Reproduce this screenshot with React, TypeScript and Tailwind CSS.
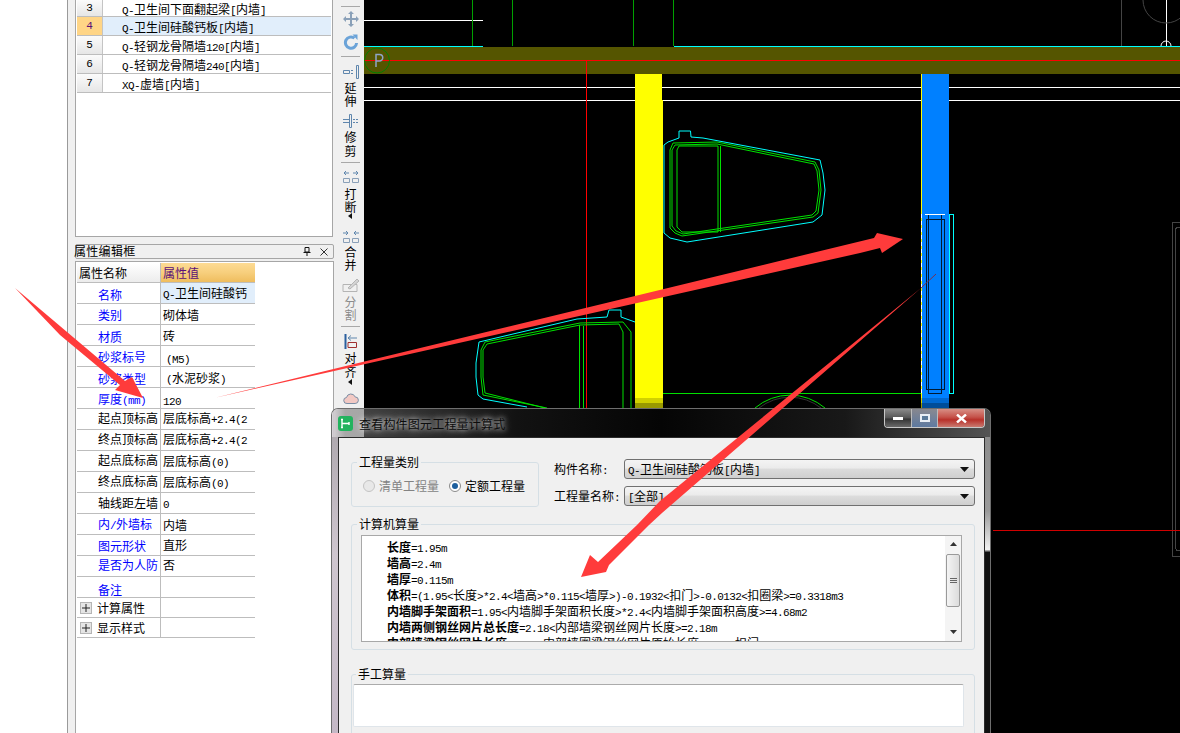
import React from "react";

const Mix = ({ text }: { text: string }) => (
  <>
    {text
      .split(/([\x00-\x7f]+)/)
      .filter(Boolean)
      .map((s, i) =>
        /^[\x00-\x7f]/.test(s) ? (
          <span key={i} className="font-['Liberation_Mono',monospace] text-[11px] font-normal leading-none tracking-[-0.6px]">
            {s}
          </span>
        ) : (
          <span key={i}>{s}</span>
        )
      )}
  </>
);

const listRows = [
  { no: "3", name: "Q-卫生间下面翻起梁[内墙]", h: "h-[17px]" },
  { no: "4", name: "Q-卫生间硅酸钙板[内墙]", h: "h-[19px]", active: true },
  { no: "5", name: "Q-轻钢龙骨隔墙120[内墙]", h: "h-[19px]" },
  { no: "6", name: "Q-轻钢龙骨隔墙240[内墙]", h: "h-[19px]" },
  { no: "7", name: "XQ-虚墙[内墙]", h: "h-[19px]" },
];

// lc / vc nudge the label and value text, the old grid draws them unevenly
const props = [
  { label: "名称", value: "Q-卫生间硅酸钙", blue: true, active: true, lc: "pt-[4px]", vc: "" },
  { label: "类别", value: "砌体墙", blue: true, lc: "pt-[2px]", vc: "pt-[2px]" },
  { label: "材质", value: "砖", blue: true, lc: "pt-[4px]", vc: "pt-[2px]" },
  { label: "砂浆标号", value: "(M5)", blue: true, lc: "pt-[2px]", vc: "pl-[5px] pt-[4px]" },
  { label: "砂浆类型", value: "(水泥砂浆)", blue: true, lc: "pt-[4px]", vc: "pl-[5px] pt-[2px]" },
  { label: "厚度(mm)", value: "120", blue: true, lc: "pt-[2px]", vc: "pt-[4px]" },
  { label: "起点顶标高", value: "层底标高+2.4(2", lc: "pb-[2px]", vc: "pb-[2px]" },
  { label: "终点顶标高", value: "层底标高+2.4(2", lc: "pb-[2px]", vc: "pb-[2px]" },
  { label: "起点底标高", value: "层底标高(0)", lc: "pb-[2px]", vc: "" },
  { label: "终点底标高", value: "层底标高(0)", lc: "pb-[2px]", vc: "" },
  { label: "轴线距左墙", value: "0", lc: "", vc: "" },
  { label: "内/外墙标", value: "内墙", blue: true, lc: "", vc: "pt-[2px]" },
  { label: "图元形状", value: "直形", blue: true, lc: "pt-[2px]", vc: "" },
  { label: "是否为人防", value: "否", blue: true, lc: "pb-[2px]", vc: "pb-[2px]" },
  { label: "备注", value: "", blue: true, lc: "pt-[6px]", vc: "" },
];

const calcLines = [
  { b: "长度", t: "=1.95m" },
  { b: "墙高", t: "=2.4m" },
  { b: "墙厚", t: "=0.115m" },
  { b: "体积", t: "=(1.95<长度>*2.4<墙高>*0.115<墙厚>)-0.1932<扣门>-0.0132<扣圈梁>=0.3318m3" },
  { b: "内墙脚手架面积", t: "=1.95<内墙脚手架面积长度>*2.4<内墙脚手架面积高度>=4.68m2" },
  { b: "内墙两侧钢丝网片总长度", t: "=2.18<内部墙梁钢丝网片长度>=2.18m" },
  { b: "内部墙梁钢丝网片长度", t: "=2.78<内部墙圈梁钢丝网片原始长度>-1.6<扣门>=0.18" },
];

const Sep = ({ className }: { className: string }) => (
  <div className={`h-px w-[19px] shrink-0 bg-[#a8a8a8] ${className}`} />
);

const Label = ({ text, className, gray }: { text: string; className: string; gray?: boolean }) => (
  <div className={`w-3 shrink-0 text-center text-[12px] ${gray ? "text-[#8c8c8c]" : "text-black"} ${className}`}>
    {text.split("").map((c) => (
      <div key={c}>{c}</div>
    ))}
  </div>
);

const MoreArrow = () => (
  <svg width="5" height="6" viewBox="0 0 5 6" className="shrink-0">
    <path d="M4 0V6L0 3Z" fill="#111" />
  </svg>
);

const Toolbar = () => (
  <div className="flex w-[27px] shrink-0 flex-col items-center bg-[#f0f0f0]">
    <Sep className="mt-[6px]" />
    <svg width="16" height="16" viewBox="0 0 16 16" className="mt-[4px] shrink-0" fill="#8aa0b8">
      <path d="M8 0l3 3H9v4h4V5l3 3-3 3V9H9v4h2l-3 3-3-3h2V9H3v2L0 8l3-3v2h4V3H5z" />
    </svg>
    <svg width="16" height="16" viewBox="0 0 16 16" className="mt-[7px] shrink-0" fill="none">
      <path d="M11.5 4.2A5.6 5.6 0 1 0 13.6 9" stroke="#6ba3d8" strokeWidth="3" />
      <path d="M9.5 0.5h5v5.5z" fill="#6ba3d8" />
    </svg>
    <Sep className="mt-[6px]" />
    <svg width="16" height="14" viewBox="0 0 16 14" className="mt-[8px] shrink-0" fill="none" stroke="#5f86ad">
      <path d="M0.5 5.5h6v3h-6zM8 5.5h2M8 8.5h2" />
      <path d="M13.5 0.5h2v13h-2z" />
    </svg>
    <Label text="延伸" className="mt-[2px] leading-[13px]" />
    <svg width="16" height="14" viewBox="0 0 16 14" className="mt-[7px] shrink-0" fill="none" stroke="#5f86ad">
      <path d="M6.5 0.5h2v13h-2zM0 5.5h6M0 8.5h6M10 5.5h2M13 5.5h2M10 8.5h2M13 8.5h2" />
    </svg>
    <Label text="修剪" className="mt-[2px] leading-[14px]" />
    <Sep className="mt-[4px]" />
    <svg width="16" height="14" viewBox="0 0 16 14" className="mt-[7px] shrink-0" fill="none" stroke="#5f86ad">
      <path d="M6 3H1M3 1L1 3l2 2M10 3h5M13 1l2 2-2 2" />
      <path d="M0.5 8.5h6v4h-6zM9.5 8.5h6v4h-6z" stroke="#8aa0b8" />
    </svg>
    <Label text="打断" className="mt-[3px] leading-[13px]" />
    <MoreArrow />
    <svg width="16" height="14" viewBox="0 0 16 14" className="mt-[11px] shrink-0" fill="none" stroke="#5f86ad">
      <path d="M0 3h5M3 1l2 2-2 2M16 3h-5M13 1l-2 2 2 2" />
      <path d="M0.5 8.5h6v4h-6zM9.5 8.5h6v4h-6z" stroke="#8aa0b8" />
    </svg>
    <Label text="合并" className="mt-[1px] leading-[13px]" />
    <svg width="17" height="15" viewBox="0 0 17 15" className="mt-[7px] shrink-0" fill="none" stroke="#b4b4b4">
      <path d="M1 6.5h14M1 13.5h14M1 6.5v7M15 6.5v7" />
      <path d="M6 10L15 1l2 2-9 8z" fill="#d4d4d4" />
    </svg>
    <Label text="分割" gray className="mt-[2px] leading-[13px]" />
    <Sep className="mt-[5px]" />
    <svg width="16" height="16" viewBox="0 0 16 16" className="mt-[7px] shrink-0" fill="none">
      <path d="M2.5 0v15" stroke="#2a5f9e" strokeWidth="2" />
      <path d="M5 8.5h8.5v5H5z" stroke="#a03030" />
      <path d="M14 4H5M8 1.5L5 4l3 2.5" stroke="#5f86ad" />
    </svg>
    <Label text="对齐" className="mt-[1px] leading-[14px]" />
    <MoreArrow />
    <svg width="16" height="13" viewBox="0 0 16 13" className="mt-[7px] shrink-0" fill="#f2c9c4" stroke="#7a8ea5">
      <path d="M4 11.5a3 3 0 0 1-.5-6 4.5 4.5 0 0 1 8.6-.6 3.2 3.2 0 0 1 0 6.6z" />
    </svg>
  </div>
);

const Drawing = () => (
  <svg width="816" height="733" viewBox="364 0 816 733" className="block" fill="none" shapeRendering="crispEdges">
    <path d="M364 20.5H483M364 87.5H1180M364 100.5H1180" stroke="#fff" />
    <path d="M472.5 0V46M512.5 0V46M633.5 0V46M673.5 0V46" stroke="#00a000" />
    <path d="M1121.5 0V46" stroke="#444" />
    <path d="M1166.5 0V46" stroke="#fff" />
    <g shapeRendering="auto">
      <circle cx="1166" cy="0" r="23" stroke="#444" />
      <path d="M1161 46a5 5 0 0 1 10 0" stroke="#fff" />
    </g>
    <path d="M364 46.5H483M674 46.5H1180" stroke="#00ffff" />
    <rect x="364" y="47" width="816" height="27" fill="#555500" stroke="none" />
    <path d="M364 60.5H1180M586.5 60V408" stroke="#ff0000" />
    <rect x="635" y="74" width="27" height="334" fill="#ffff00" stroke="none" />
    <rect x="662" y="100" width="1" height="308" fill="#ffff00" stroke="none" />
    <rect x="922" y="74" width="27" height="334" fill="#0080ff" stroke="none" />
    <path d="M921.5 74V408" stroke="#ffff00" />
    <rect x="635" y="398" width="28" height="5" fill="#000" fillOpacity="0.18" stroke="none" />
    <rect x="635" y="403" width="28" height="5" fill="#000" fillOpacity="0.4" stroke="none" />
    <rect x="921" y="398" width="28" height="5" fill="#000" fillOpacity="0.18" stroke="none" />
    <rect x="921" y="403" width="28" height="5" fill="#000" fillOpacity="0.4" stroke="none" />
    <g shapeRendering="auto">
      <circle cx="377" cy="60.5" r="12.5" stroke="#008000" />
      <path d="M376 67V54.5h3.5a3 3 0 0 1 0 6.5H376" stroke="#8ea5c8" strokeWidth="1.5" />
      <path
        d="M679 138V131H690.5L691 137L703 138L820 160L823 173L825 190L822 215L813 222L687 242L670 238L664 233V145L668 142L679 138"
        stroke="#00ffff"
      />
      <path
        d="M670 150L673 143L717 142L815 162L819 170L821 190L818 213L813 217L682 236L675 233L670 228Z"
        stroke="#00e000"
      />
      <path d="M672 150L675 145L717 144L814 164L817 171L819 190L816 211L812 215L683 234L676 231L672 226Z" stroke="#00e000" />
      <path d="M677 227V150L679 146H718V232H682L677 227M720.5 146V232" stroke="#00e000" />
      <path
        d="M635 322L621 317V310H609L607 317L577 319L479 342L476 363V377L478 395L483 399L527 407"
        stroke="#00ffff"
      />
      <path d="M547 408L483 395L481 377V350L485 342L580 323L623 322L631 332V408" stroke="#00e000" />
      <path d="M545 408L485 393L483 377V350L487 344L580 325L619 324L623 332V408" stroke="#00e000" />
      <path d="M579.5 325V408M583.5 326V408" stroke="#00e000" />
      <path d="M663 393.5H921" stroke="#00e000" />
      <path d="M755 408A54 54 0 0 1 825 408" stroke="#00e000" />
      <path d="M759 408A50 50 0 0 1 821 408" stroke="#333" />
    </g>
    <rect x="928.5" y="214.5" width="13" height="179" stroke="#001a33" />
    <rect x="926.5" y="219.5" width="18" height="170" stroke="#001a33" />
    <rect x="949.5" y="214.5" width="4" height="179" stroke="#00ffff" />
    <path d="M921.5 214V393" stroke="#fff" strokeDasharray="4 3" />
    <path d="M925 214.5H945" stroke="#fff" />
    <path d="M1180 222.5H1172.5V556.5H1180M1180 227.5H1177L1175.5 229V548L1177 550.5H1180" stroke="#444" />
    <path d="M993 530.5H1180" stroke="#d00000" />
  </svg>
);

const Arrows = () => (
  <svg width="1180" height="733" viewBox="0 0 1180 733" className="pointer-events-none absolute inset-0 z-20" fill="#ff3b3b">
    <path d="M214 398L874 238L877 233L903 239L882 253L880 248L860 253Z" />
    <path d="M15 288L125 381L132 377L143 398L115 390L120 385L60 335Z" />
    <path d="M921 288L660 501L637 525L598 562L590 555L581 577L606 572L609 565L649 525L662 513Z" />
    <path d="M921 288L936 274" stroke="#7a3050" strokeWidth="1" />
  </svg>
);

const Select = ({ text }: { text: string }) => (
  <div className="flex h-[20px] w-[351px] items-center justify-between rounded-[3px] border border-[#707070] bg-[linear-gradient(#f4f4f4_0%,#ebebeb_45%,#dcdcdc_50%,#cfcfcf_100%)] pl-[3px] pr-[5px] text-[12px] leading-[14px] text-black">
    <span>
      <Mix text={text} />
    </span>
    <svg width="9" height="5" viewBox="0 0 9 5">
      <path d="M0 0H9L4.5 5Z" fill="#111" />
    </svg>
  </div>
);

const Dialog = () => (
  <div className="absolute left-[331px] top-[408px] z-10 flex h-[325px] w-[660px] flex-col overflow-hidden rounded-t-[7px] border border-b-0 border-[#6e6e6e]">
    <div className="flex h-[28px] shrink-0 items-start bg-[linear-gradient(90deg,rgba(215,210,215,0.95)_0%,rgba(120,120,120,0.6)_2%,rgba(40,40,40,0.45)_28%,rgba(25,25,25,0.2)_50%,rgba(70,70,70,0.35)_78%,rgba(140,140,140,0.6)_100%)] pl-[6px] pr-[5px]">
      <svg width="15" height="15" viewBox="0 0 15 15" className="mt-[7px] shrink-0">
        <rect width="15" height="15" rx="3" fill="#22b35e" />
        <path d="M4 3.5V11.5M4 7.5H11M3 3.5H5M3 11.5H5M11 6V9" stroke="#fff" strokeWidth="1.4" fill="none" />
      </svg>
      <span className="ml-[6px] mt-[7px] text-[12px] leading-[15px] tracking-[0.2px] text-[#0c0c0c] [text-shadow:0_0_5px_rgba(255,255,255,0.8),0_0_9px_rgba(255,255,255,0.6)]">
        查看构件图元工程量计算式
      </span>
      <div className="ml-auto flex h-[19px] items-stretch overflow-hidden rounded-b-[4px] border border-t-0 border-[#c8c8c8]">
        <div className="flex w-[27px] items-center justify-center border-r border-[#bbb] bg-[linear-gradient(#8a8a8a,#555_50%,#333_55%,#6a6a6a)]">
          <div className="h-[3px] w-[10px] bg-white" />
        </div>
        <div className="flex w-[26px] items-center justify-center border-r border-[#bbb] bg-[linear-gradient(rgba(170,170,180,0.7),rgba(110,150,205,0.7))]">
          <div className="h-[8px] w-[10px] border-2 border-[#e8eef5] bg-[#5a7a9a]" />
        </div>
        <div className="flex w-[46px] items-center justify-center bg-[linear-gradient(#d88f85,#c5524a_45%,#b8302a_60%,#c97a70)]">
          <svg width="11" height="9" viewBox="0 0 11 9">
            <path d="M1 0.5L10 8.5M10 0.5L1 8.5" stroke="#fff" strokeWidth="2.4" />
          </svg>
        </div>
      </div>
    </div>
    <div className="flex min-h-0 flex-1">
      <div className="w-[6px] shrink-0 bg-[linear-gradient(#b0aab0,#cfc6cf_40%,#c4b8c6)]" />
      <div className="w-[647px] shrink-0 border-x border-t border-[#2c2c2c] bg-[#f0f0f0] text-[12px]">
        <div className="flex items-start pl-[12px]">
          <fieldset className="mt-[17px] h-[52px] w-[188px] rounded-[3px] border border-[#d5dfe5]">
            <legend className="ml-[5px] px-[2px] leading-[14px]">工程量类别</legend>
            <div className="flex items-center pl-[11px] pt-[10px] leading-[14px]">
              <span className="h-3 w-3 rounded-full border border-[#c4c4c4] bg-[#e8e8e8]" />
              <span className="ml-[4px] w-[60px] text-[#838383]">清单工程量</span>
              <span className="ml-[10px] flex h-3 w-3 items-center justify-center rounded-full border border-[#8a8a8a] bg-white">
                <span className="h-[6px] w-[6px] rounded-full bg-[#1d5f9e]" />
              </span>
              <span className="ml-[4px] w-[60px] text-black">定额工程量</span>
            </div>
          </fieldset>
          <div className="ml-[15px] mt-[21px] flex flex-col gap-[7px]">
            <div className="flex items-center">
              <span className="w-[70px]">
                <Mix text="构件名称:" />
              </span>
              <Select text="Q-卫生间硅酸钙板[内墙]" />
            </div>
            <div className="flex items-center">
              <span className="w-[70px]">
                <Mix text="工程量名称:" />
              </span>
              <Select text="[全部]" />
            </div>
          </div>
        </div>
        <fieldset className="ml-[12px] mt-[10px] h-[133px] w-[624px] rounded-[3px] border border-[#d5dfe5]">
          <legend className="ml-[5px] px-[2px] leading-[14px]">计算机算量</legend>
          <div className="ml-[9px] mt-[4px] flex h-[107px] w-[601px] overflow-hidden border border-[#a8a8a8] bg-white">
            <div className="min-w-0 flex-1 overflow-hidden whitespace-nowrap pl-[25px] pt-[3px] leading-[16px] text-black">
              {calcLines.map((l) => (
                <div key={l.b} className="h-[16px]">
                  <b className="font-bold">{l.b}</b>
                  <Mix text={l.t} />
                </div>
              ))}
            </div>
            <div className="flex w-[16px] shrink-0 flex-col items-center bg-[#f4f4f4]">
              <svg width="7" height="4" viewBox="0 0 7 4" className="mt-[6px]">
                <path d="M0 4L3.5 0L7 4Z" fill="#333" />
              </svg>
              <div className="mt-[8px] flex h-[53px] w-[14px] flex-col items-center justify-center gap-[1px] rounded-[2px] border border-[#9a9a9a] bg-[linear-gradient(90deg,#f4f4f4,#dcdcdc)]">
                <span className="h-px w-[7px] bg-[#666]" />
                <span className="h-px w-[7px] bg-[#666]" />
                <span className="h-px w-[7px] bg-[#666]" />
              </div>
              <svg width="7" height="4" viewBox="0 0 7 4" className="mt-[23px]">
                <path d="M0 0L3.5 4L7 0Z" fill="#333" />
              </svg>
            </div>
          </div>
        </fieldset>
        <fieldset className="ml-[12px] mt-[17px] h-[80px] w-[624px] rounded-[3px] border border-[#d5dfe5]">
          <legend className="ml-[4px] px-[2px] leading-[14px]">手工算量</legend>
          <div className="ml-px mt-[3px] h-[43px] w-[611px] rounded-[2px] border border-[#dfe5ea] border-t-[#ababab] bg-white" />
        </fieldset>
      </div>
      <div className="w-[5px] shrink-0 bg-[linear-gradient(#8c8c8c_0%,#9a9a9a_25%,#f2f2f2_38%,#111_39%,#111_100%)]" />
    </div>
  </div>
);

export default function App() {
  return (
    <div className="relative flex h-[733px] w-[1180px] overflow-hidden bg-white font-['Noto_Sans_CJK_SC','Noto_Sans',sans-serif] text-[12px]">
      <div className="w-[67px] shrink-0 bg-white" />
      <div className="flex w-[270px] shrink-0 flex-col border-l border-[#9a9a9a] bg-[#f0f0f0] pl-[7px] pr-[4px]">
        <div className="h-[237px] w-[258px] shrink-0 border-x border-b border-[#a6a6a6] bg-white pl-px">
          {listRows.map((r) => (
            <div key={r.no} className={`flex w-[254px] border-b border-[#bdbdbd] ${r.h}`}>
              <div
                className={`flex w-[26px] items-center justify-center border-r border-[#c4c4c4] font-['Liberation_Mono',monospace] text-[11px] ${
                  r.active ? "bg-[#ffd586] text-[#5a1078]" : "bg-[linear-gradient(#fbfbfb,#e6e6e6)] text-black"
                }`}
              >
                {r.no}
              </div>
              <div className={`flex flex-1 items-center whitespace-nowrap pl-[19px] pt-[2px] leading-[14px] ${r.active ? "bg-[#e1eefb]" : ""}`}>
                <span>
                  <Mix text={r.name} />
                </span>
              </div>
            </div>
          ))}
        </div>
        <div className="mt-[7px] flex h-[15px] w-[259px] shrink-0 items-center justify-between rounded-[2px] border border-[#a6a6a6] pr-[5px] leading-[14px] tracking-[0.3px] text-black">
          <span className="-ml-[2px] pb-[2px]">属性编辑框</span>
          <span className="flex items-center gap-[9px]">
            <svg width="8" height="9" viewBox="0 0 8 9">
              <path d="M2 0.5H6V5H2ZM0.5 5.5H7.5M4 6V9" stroke="#111" fill="none" />
            </svg>
            <svg width="8" height="8" viewBox="0 0 8 8">
              <path d="M0.5 0.5L7.5 7.5M7.5 0.5L0.5 7.5" stroke="#333" fill="none" />
            </svg>
          </span>
        </div>
        <div className="mt-[2px] min-h-0 w-[259px] flex-1 border-x border-t border-[#a6a6a6] bg-white pl-px pt-px">
          <div className="flex h-[20px] w-[178px] border-b border-[#bdbdbd]">
            <div className="flex w-[84px] items-center border-r border-[#bdbdbd] bg-[linear-gradient(#fff,#ececec)] pl-[2px] leading-[14px]">属性名称</div>
            <div className="flex flex-1 items-center bg-[linear-gradient(#fddb94,#f7cf7d_50%,#efbd5e)] pl-[2px] leading-[14px] text-[#5a1078]">属性值</div>
          </div>
          {props.map((p) => (
            <div key={p.label} className="flex h-[21px] w-[178px] border-b border-[#bdbdbd]">
              <div className={`flex w-[84px] items-center whitespace-nowrap border-r border-[#bdbdbd] pl-[21px] leading-[14px] ${p.blue ? "text-[#0000ff]" : "text-black"} ${p.lc}`}>
                <span>
                  <Mix text={p.label} />
                </span>
              </div>
              <div className={`flex min-w-0 flex-1 items-center overflow-hidden whitespace-pre leading-[14px] text-black ${p.active ? "bg-[#e1eefb]" : ""} ${p.vc.includes("pl-") ? "" : "pl-[2px]"} ${p.vc}`}>
                <span>
                  <Mix text={p.value} />
                </span>
              </div>
            </div>
          ))}
          {["计算属性", "显示样式"].map((g) => (
            <div key={g} className="flex h-[20px] w-[178px] border-b border-[#bdbdbd]">
              <div className="flex w-[84px] items-center gap-[5px] border-r border-[#bdbdbd] pl-[3px] leading-[14px] text-black">
                <span className="flex h-[12px] w-[12px] items-center justify-center border border-[#b5b5b5] bg-[#e4e4e4]">
                  <svg width="8" height="8" viewBox="0 0 8 8">
                    <path d="M0 4H8M4 0V8" stroke="#222" fill="none" />
                  </svg>
                </span>
                {g}
              </div>
              <div className="flex-1" />
            </div>
          ))}
        </div>
      </div>
      <Toolbar />
      <div className="min-w-0 flex-1 bg-black">
        <Drawing />
      </div>
      <Dialog />
      <Arrows />
    </div>
  );
}
